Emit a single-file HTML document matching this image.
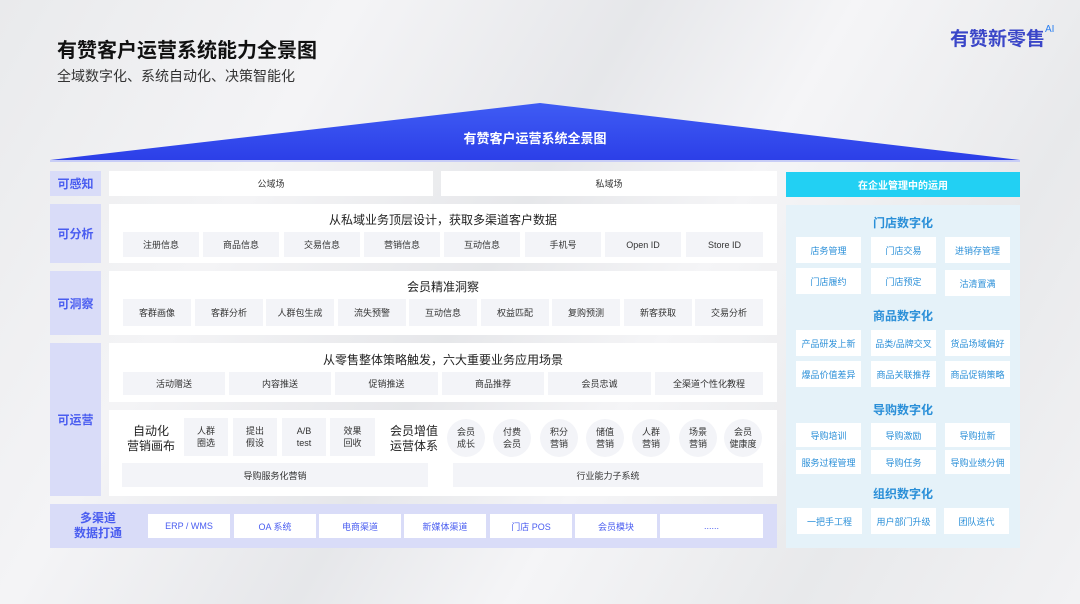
<!DOCTYPE html>
<html><head><meta charset="utf-8"><style>
*{margin:0;padding:0;box-sizing:border-box}
body{width:1080px;height:604px;overflow:hidden;position:relative;font-family:"Liberation Sans","Noto Sans CJK SC",sans-serif;background:linear-gradient(120deg,#e9eaec 0%,#f4f4f6 25%,#e6e7ea 45%,#f5f5f7 60%,#e8e9eb 80%,#f2f2f4 100%)}
div{position:absolute}
.c{display:flex;align-items:center;justify-content:center;text-align:center}
.lab{background:#d9dcf8;color:#4a5df0;font-size:12px;font-weight:bold;left:50px;width:51px}
.w{background:#fff}
.ch{background:#f3f4f8;color:#333;font-size:9px;height:25px}
.t{color:#222;font-size:12px;width:100%;text-align:center}
.rc{background:#fff;color:#2a8fd8;font-size:9px;width:65px;height:26px}
.rt{color:#2a8fd8;font-size:12px;font-weight:bold;left:786px;width:234px;text-align:center}
.cir{width:38px;height:38px;border-radius:50%;background:#f3f4f8;font-size:9px;line-height:12px;color:#333}
.bc{background:#fff;color:#4a5df0;font-size:9px;height:24px;width:82px;top:514px}
</style></head><body>
<div style="left:57px;top:34px;font-size:20px;font-weight:bold;color:#111">有赞客户运营系统能力全景图</div>
<div style="left:57px;top:66px;font-size:14px;color:#333">全域数字化、系统自动化、决策智能化</div>
<div style="left:950px;top:24px;font-size:19px;font-weight:bold;color:#3a46c8">有赞新零售<span style="font-size:10px;color:#2a7ff0;vertical-align:top;font-weight:normal">AI</span></div>
<svg style="position:absolute;left:0;top:0" width="1080" height="170"><defs><linearGradient id="g" x1="0" y1="0" x2="0" y2="1"><stop offset="0" stop-color="#3f5cf4"/><stop offset="1" stop-color="#2c3fe8"/></linearGradient></defs><polygon points="540,103 1020,160 50,160" fill="url(#g)"/><rect x="50" y="160" width="970" height="2" fill="#c8cdf6"/></svg>
<div style="left:50px;top:128px;width:970px;text-align:center;color:#fff;font-size:13px;font-weight:bold">有赞客户运营系统全景图</div>

<div class="lab c" style="top:171px;height:25px">可感知</div>
<div class="w c" style="left:109px;top:171px;width:324px;height:25px;font-size:9px;color:#333">公域场</div>
<div class="w c" style="left:441px;top:171px;width:336px;height:25px;font-size:9px;color:#333">私域场</div>

<div class="lab c" style="top:204px;height:59px">可分析</div>
<div class="w" style="left:109px;top:204px;width:668px;height:59px">
<div class="t" style="top:7px">从私域业务顶层设计，获取多渠道客户数据</div></div>
<div class="ch c" style="left:123px;top:232px;width:76px">注册信息</div>
<div class="ch c" style="left:203px;top:232px;width:76px">商品信息</div>
<div class="ch c" style="left:284px;top:232px;width:76px">交易信息</div>
<div class="ch c" style="left:364px;top:232px;width:76px">营销信息</div>
<div class="ch c" style="left:444px;top:232px;width:76px">互动信息</div>
<div class="ch c" style="left:525px;top:232px;width:76px">手机号</div>
<div class="ch c" style="left:605px;top:232px;width:76px">Open ID</div>
<div class="ch c" style="left:686px;top:232px;width:77px">Store ID</div>

<div class="lab c" style="top:271px;height:64px">可洞察</div>
<div class="w" style="left:109px;top:271px;width:668px;height:64px">
<div class="t" style="top:7px">会员精准洞察</div></div>
<div class="ch c" style="left:123px;top:299px;width:68px;height:27px">客群画像</div>
<div class="ch c" style="left:195px;top:299px;width:68px;height:27px">客群分析</div>
<div class="ch c" style="left:266px;top:299px;width:68px;height:27px">人群包生成</div>
<div class="ch c" style="left:338px;top:299px;width:68px;height:27px">流失预警</div>
<div class="ch c" style="left:409px;top:299px;width:68px;height:27px">互动信息</div>
<div class="ch c" style="left:481px;top:299px;width:68px;height:27px">权益匹配</div>
<div class="ch c" style="left:552px;top:299px;width:68px;height:27px">复购预测</div>
<div class="ch c" style="left:624px;top:299px;width:68px;height:27px">新客获取</div>
<div class="ch c" style="left:695px;top:299px;width:68px;height:27px">交易分析</div>

<div class="lab c" style="top:343px;height:153px">可运营</div>
<div class="w" style="left:109px;top:343px;width:668px;height:59px">
<div class="t" style="top:8px">从零售整体策略触发，六大重要业务应用场景</div></div>
<div class="ch c" style="left:123px;top:372px;width:102px;height:23px">活动赠送</div>
<div class="ch c" style="left:229px;top:372px;width:102px;height:23px">内容推送</div>
<div class="ch c" style="left:335px;top:372px;width:103px;height:23px">促销推送</div>
<div class="ch c" style="left:442px;top:372px;width:102px;height:23px">商品推荐</div>
<div class="ch c" style="left:548px;top:372px;width:103px;height:23px">会员忠诚</div>
<div class="ch c" style="left:655px;top:372px;width:108px;height:23px">全渠道个性化教程</div>
<div class="w" style="left:109px;top:410px;width:668px;height:86px"></div>
<div style="left:122px;top:424px;width:58px;text-align:center;font-size:12px;line-height:15px;color:#222">自动化<br>营销画布</div>
<div class="ch c" style="left:184px;top:418px;width:44px;height:38px;line-height:12px">人群<br>圈选</div>
<div class="ch c" style="left:233px;top:418px;width:44px;height:38px;line-height:12px">提出<br>假设</div>
<div class="ch c" style="left:282px;top:418px;width:44px;height:38px;line-height:12px">A/B<br>test</div>
<div class="ch c" style="left:330px;top:418px;width:45px;height:38px;line-height:12px">效果<br>回收</div>
<div style="left:386px;top:424px;width:56px;text-align:center;font-size:12px;line-height:15px;color:#222">会员增值<br>运营体系</div>
<div class="cir c" style="left:447px;top:419px">会员<br>成长</div>
<div class="cir c" style="left:493px;top:419px">付费<br>会员</div>
<div class="cir c" style="left:540px;top:419px">积分<br>营销</div>
<div class="cir c" style="left:586px;top:419px">储值<br>营销</div>
<div class="cir c" style="left:632px;top:419px">人群<br>营销</div>
<div class="cir c" style="left:679px;top:419px">场景<br>营销</div>
<div class="cir c" style="left:724px;top:419px">会员<br>健康度</div>
<div class="ch c" style="left:122px;top:463px;width:306px;height:24px">导购服务化营销</div>
<div class="ch c" style="left:453px;top:463px;width:310px;height:24px">行业能力子系统</div>

<div style="left:50px;top:504px;width:727px;height:44px;background:#d9dcf8"></div>
<div style="left:62px;top:511px;width:72px;text-align:center;font-size:12px;line-height:15px;font-weight:bold;color:#4a5df0">多渠道<br>数据打通</div>
<div class="bc c" style="left:148px">ERP / WMS</div>
<div class="bc c" style="left:234px">OA 系统</div>
<div class="bc c" style="left:319px">电商渠道</div>
<div class="bc c" style="left:404px">新媒体渠道</div>
<div class="bc c" style="left:490px">门店 POS</div>
<div class="bc c" style="left:575px">会员模块</div>
<div class="bc c" style="left:660px;width:103px">......</div>

<div class="c" style="left:786px;top:172px;width:234px;height:25px;background:#22d0f3;color:#fff;font-size:10px;font-weight:bold">在企业管理中的运用</div>
<div style="left:786px;top:205px;width:234px;height:343px;background:#e5f2f9"></div>
<div class="rt" style="top:214px">门店数字化</div>
<div class="rc c" style="left:796px;top:237px">店务管理</div>
<div class="rc c" style="left:871px;top:237px">门店交易</div>
<div class="rc c" style="left:945px;top:237px">进销存管理</div>
<div class="rc c" style="left:796px;top:268px">门店履约</div>
<div class="rc c" style="left:871px;top:268px">门店预定</div>
<div class="rc c" style="left:945px;top:270px">沽清置满</div>
<div class="rt" style="top:307px">商品数字化</div>
<div class="rc c" style="left:796px;top:330px">产品研发上新</div>
<div class="rc c" style="left:871px;top:330px">品类/品牌交叉</div>
<div class="rc c" style="left:945px;top:330px">货品场域偏好</div>
<div class="rc c" style="left:796px;top:361px">爆品价值差异</div>
<div class="rc c" style="left:871px;top:361px">商品关联推荐</div>
<div class="rc c" style="left:945px;top:361px">商品促销策略</div>
<div class="rt" style="top:401px">导购数字化</div>
<div class="rc c" style="left:796px;top:423px;height:24px">导购培训</div>
<div class="rc c" style="left:871px;top:423px;height:24px">导购激励</div>
<div class="rc c" style="left:945px;top:423px;height:24px">导购拉新</div>
<div class="rc c" style="left:796px;top:450px;height:24px">服务过程管理</div>
<div class="rc c" style="left:871px;top:450px;height:24px">导购任务</div>
<div class="rc c" style="left:945px;top:450px;height:24px">导购业绩分佣</div>
<div class="rt" style="top:485px">组织数字化</div>
<div class="rc c" style="left:797px;top:508px">一把手工程</div>
<div class="rc c" style="left:871px;top:508px">用户部门升级</div>
<div class="rc c" style="left:944px;top:508px">团队迭代</div>
</body></html>
